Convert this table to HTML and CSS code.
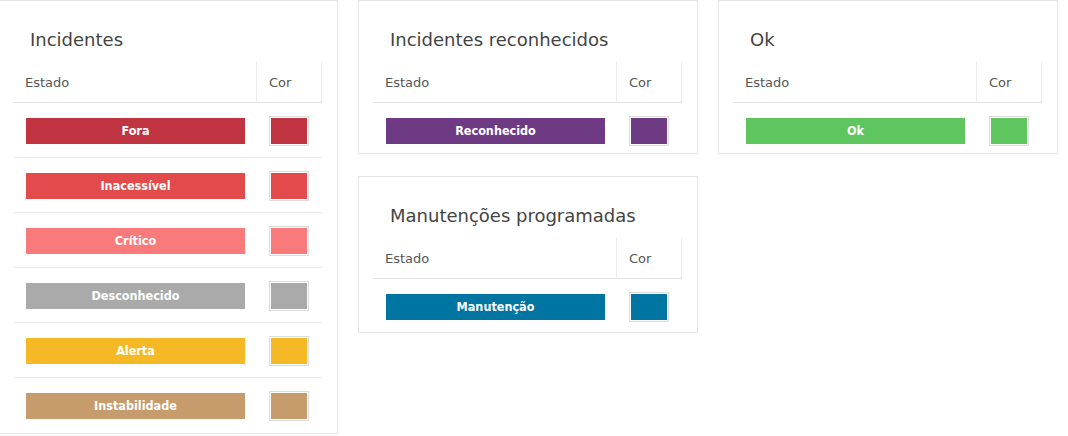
FILE: index.html
```html
<!DOCTYPE html>
<html lang="pt">
<head>
<meta charset="utf-8">
<title>Cores de estado</title>
<link rel="stylesheet" href="styles.css">
</head>
<body>
<div class="board">
  <section class="card card-tall">
    <h2 class="card-title">Incidentes</h2>
    <div class="grid-head"><div class="th">Estado</div><div class="th">Cor</div></div>
    <div class="grid-row"><span class="badge fora">Fora</span><span class="swatch fora"></span></div>
    <div class="grid-row"><span class="badge inacessivel">Inacessível</span><span class="swatch inacessivel"></span></div>
    <div class="grid-row"><span class="badge critico">Crítico</span><span class="swatch critico"></span></div>
    <div class="grid-row"><span class="badge desconhecido">Desconhecido</span><span class="swatch desconhecido"></span></div>
    <div class="grid-row"><span class="badge alerta">Alerta</span><span class="swatch alerta"></span></div>
    <div class="grid-row"><span class="badge instabilidade">Instabilidade</span><span class="swatch instabilidade"></span></div>
  </section>
  <div class="stack">
    <section class="card card-short">
      <h2 class="card-title">Incidentes reconhecidos</h2>
      <div class="grid-head"><div class="th">Estado</div><div class="th">Cor</div></div>
      <div class="grid-row"><span class="badge reconhecido">Reconhecido</span><span class="swatch reconhecido"></span></div>
    </section>
    <section class="card card-mid">
      <h2 class="card-title">Manutenções programadas</h2>
      <div class="grid-head"><div class="th">Estado</div><div class="th">Cor</div></div>
      <div class="grid-row"><span class="badge manutencao">Manutenção</span><span class="swatch manutencao"></span></div>
    </section>
  </div>
  <section class="card card-short">
    <h2 class="card-title">Ok</h2>
    <div class="grid-head"><div class="th">Estado</div><div class="th">Cor</div></div>
    <div class="grid-row"><span class="badge ok">Ok</span><span class="swatch ok"></span></div>
  </section>
</div>
</body>
</html>
```
FILE: styles.css
```css
html, body {
  margin: 0;
  padding: 0;
  background: #fff;
}

body {
  font-family: "DejaVu Sans", Verdana, sans-serif;
}

.board {
  display: flex;
  align-items: flex-start;
  gap: 20px;
  margin-left: -2px;
}

.stack {
  display: flex;
  flex-direction: column;
  gap: 22px;
}

.card {
  width: 340px;
  box-sizing: border-box;
  border: 1px solid #e6e6e6;
  padding: 0 15px;
  background: #fff;
  overflow: hidden;
}

.card-short { height: 154px; }
.card-mid { height: 157px; }

.card-title {
  margin: 28px 0 12px;
  padding-left: 16px;
  font-family: "DejaVu Sans", Verdana, sans-serif;
  font-size: 18px;
  line-height: 21px;
  font-weight: normal;
  color: #444;
}

.grid-head {
  display: grid;
  grid-template-columns: 243px 65px;
  height: 41px;
  box-sizing: border-box;
  border-bottom: 1px solid #e3e3e3;
}

.th {
  display: flex;
  align-items: center;
  box-sizing: border-box;
  border-right: 1px solid #ececec;
  padding-left: 12px;
  font-size: 13px;
  color: #555;
}

.th:first-child {
  padding-left: 11px;
}

.grid-row {
  display: grid;
  grid-template-columns: 243px 65px;
  align-items: center;
  height: 55px;
  box-sizing: border-box;
  padding-top: 1px;
  border-bottom: 1px solid #e8e8e8;
}

.grid-row:last-child {
  border-bottom-color: transparent;
}

.badge {
  display: block;
  margin-left: 12px;
  width: 219px;
  height: 26px;
  line-height: 26px;
  text-align: center;
  font-family: "DejaVu Sans Condensed", "DejaVu Sans", sans-serif;
  font-stretch: condensed;
  font-weight: bold;
  font-size: 12.5px;
  color: #fff;
}

.swatch {
  display: block;
  margin-left: 12px;
  width: 40px;
  height: 30px;
  box-sizing: border-box;
  border: 1px solid #dcdcdc;
  box-shadow: inset 0 0 0 1px #fff;
}

.fora { background: #bf3440; }
.inacessivel { background: #e24a4b; }
.critico { background: #f87a7a; }
.desconhecido { background: #aaaaaa; }
.alerta { background: #f5b926; }
.instabilidade { background: #c69c6d; }
.reconhecido { background: #6f3a84; }
.manutencao { background: #0075a2; }
.ok { background: #5ec55f; }
```
